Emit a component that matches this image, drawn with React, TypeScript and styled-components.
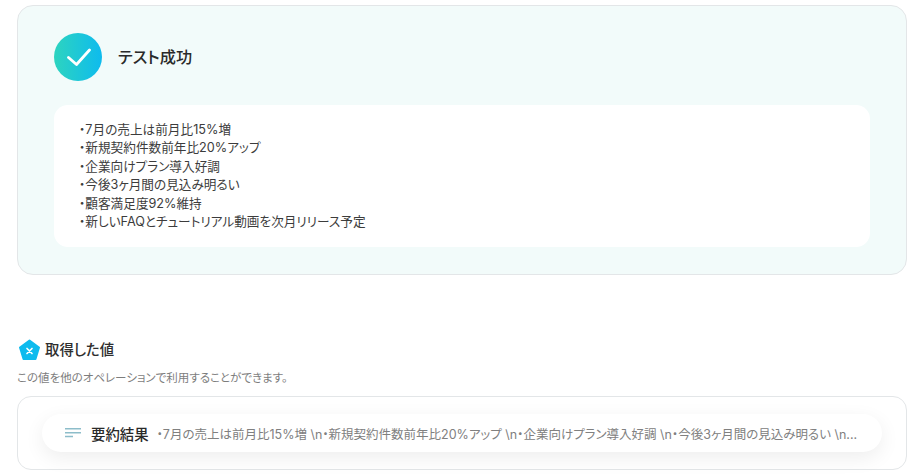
import React from 'react';
import styled, { createGlobalStyle } from 'styled-components';

const GlobalStyle = createGlobalStyle`
  html, body {
    margin: 0;
    padding: 0;
    background: #fff;
    overflow: hidden;
  }
  body {
    font-family: Inter, "Noto Sans CJK JP", sans-serif;
    font-feature-settings: "palt";
    color: #2e2e2e;
  }
`;

const Page = styled.div`
  width: 921px;
  height: 475px;
  box-sizing: border-box;
  padding: 5px 14px 0 17px;
`;

const ResultCard = styled.section`
  height: 270px;
  box-sizing: border-box;
  padding: 27px 36px 27px 36px;
  background: #f2fbfa;
  border: 1px solid #e3e6e8;
  border-radius: 16px;
`;

const ResultHeader = styled.div`
  display: flex;
  align-items: center;
  gap: 16px;
  margin-bottom: 24px;
`;

const CheckBadge = styled.div`
  width: 48px;
  height: 48px;
  border-radius: 50%;
  background: linear-gradient(90deg, #2dd4bf 0%, #0ebbee 100%);
  display: flex;
  align-items: center;
  justify-content: center;
`;

const ResultTitle = styled.h2`
  margin: 0;
  font-size: 16.2px;
  font-weight: 500;
  line-height: 20px;
  color: #2a2a2a;
`;

const ResultBody = styled.div`
  height: 142px;
  box-sizing: border-box;
  padding: 16px 25px;
  background: #fff;
  border-radius: 14px;
  font-size: 12.65px;
  line-height: 18.4px;
  color: #3c3c3c;
`;

const ResultLine = styled.div`
  white-space: nowrap;
`;

const ValuesHeader = styled.div`
  display: flex;
  align-items: center;
  gap: 5px;
  margin-top: 64px;
  padding-left: 1px;
`;

const ValuesTitle = styled.h3`
  margin: 0;
  font-size: 14.4px;
  font-weight: 500;
  line-height: 20px;
  color: #2e2e2e;
`;

const ValuesNote = styled.p`
  margin: 9px 0 0;
  font-size: 11.5px;
  line-height: 16px;
  color: #7d7d7d;
`;

const ValuesBox = styled.div`
  margin-top: 10px;
  height: 74px;
  box-sizing: border-box;
  padding: 17px 24px 0;
  border: 1px solid #e3e6e8;
  border-radius: 14px;
`;

const ValuePill = styled.div`
  height: 38px;
  box-sizing: border-box;
  padding: 0 23px;
  display: flex;
  align-items: center;
  background: #fff;
  border-radius: 19px;
  box-shadow: 0 6px 20px rgba(0, 0, 0, 0.07);
`;

const ValueIcon = styled.svg`
  flex-shrink: 0;
`;

const ValueLabel = styled.span`
  margin-left: 10px;
  font-size: 14.4px;
  font-weight: 500;
  color: #2a2a2a;
  white-space: nowrap;
`;

const ValueText = styled.span`
  margin-left: 8px;
  font-size: 12.5px;
  color: #808080;
  white-space: nowrap;
`;

const lines = [
  '・7月の売上は前月比15%増',
  '・新規契約件数前年比20%アップ',
  '・企業向けプラン導入好調',
  '・今後3ヶ月間の見込み明るい',
  '・顧客満足度92%維持',
  '・新しいFAQとチュートリアル動画を次月リリース予定',
];

const App: React.FC = () => (
  <Page>
    <GlobalStyle />
    <ResultCard>
      <ResultHeader>
        <CheckBadge>
          <svg width="26" height="20" viewBox="0 0 26 20" fill="none">
            <path d="M3.5 10.5 L11.5 17.5 L24.5 3" stroke="#fff" strokeWidth="2.8" strokeLinecap="round" strokeLinejoin="round" />
          </svg>
        </CheckBadge>
        <ResultTitle>テスト成功</ResultTitle>
      </ResultHeader>
      <ResultBody>
        {lines.map((line) => (
          <ResultLine key={line}>{line}</ResultLine>
        ))}
      </ResultBody>
    </ResultCard>

    <ValuesHeader>
      <svg width="22" height="22" viewBox="0 0 22 22">
        <path d="M11.5 1.5 L21 8.5 L17.5 20 H5.5 L2 8.5 Z" fill="#0ebbee" stroke="#0ebbee" strokeWidth="2" strokeLinejoin="round" />
        <path d="M9 9.5 L14 14.5 M14 9.5 L9 14.5" stroke="#fff" strokeWidth="1.7" strokeLinecap="round" />
      </svg>
      <ValuesTitle>取得した値</ValuesTitle>
    </ValuesHeader>
    <ValuesNote>この値を他のオペレーションで利用することができます。</ValuesNote>
    <ValuesBox>
      <ValuePill>
        <ValueIcon width="16" height="12" viewBox="0 0 16 12" fill="none">
          <path d="M0 1.7 H16 M0 5.7 H16 M0 9.6 H8" stroke="#8dbdca" strokeWidth="1.5" />
        </ValueIcon>
        <ValueLabel>要約結果</ValueLabel>
        <ValueText>・7月の売上は前月比15%増 \n・新規契約件数前年比20%アップ \n・企業向けプラン導入好調 \n・今後3ヶ月間の見込み明るい \n...</ValueText>
      </ValuePill>
    </ValuesBox>
  </Page>
);

export default App;
